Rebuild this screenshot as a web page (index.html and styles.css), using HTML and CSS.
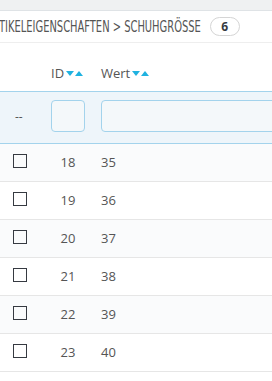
FILE: index.html
```html
<!DOCTYPE html>
<html lang="de">

<head>
    <meta charset="UTF-8">
    <meta name="viewport" content="width=device-width, initial-scale=1.0">
    <title>Schuhgrösse</title>
    <link rel="stylesheet" href="styles.css">
</head>

<body>
    <div class="topbar"></div>

    <div class="panel">
        <div class="panel-heading">
            <span class="crumb">TIKELEIGENSCHAFTEN &gt; SCHUHGRÖSSE</span>
            <span class="badge">6</span>
        </div>

        <table class="grid">
            <thead>
                <tr class="head-row">
                    <th class="col-check"></th>
                    <th class="col-id">ID<span class="sort-down"></span><span class="sort-up"></span></th>
                    <th class="col-value">Wert<span class="sort-down"></span><span class="sort-up"></span></th>
                </tr>
                <tr class="filter-row">
                    <th class="col-check"><span class="dash">--</span></th>
                    <th class="col-id"><input type="text" class="filter"></th>
                    <th class="col-value"><input type="text" class="filter filter-wide"></th>
                </tr>
            </thead>
            <tbody>
                <tr class="odd">
                    <td class="col-check"><span class="box"></span></td>
                    <td class="col-id">18</td>
                    <td class="col-value">35</td>
                </tr>
                <tr>
                    <td class="col-check"><span class="box"></span></td>
                    <td class="col-id">19</td>
                    <td class="col-value">36</td>
                </tr>
                <tr class="odd">
                    <td class="col-check"><span class="box"></span></td>
                    <td class="col-id">20</td>
                    <td class="col-value">37</td>
                </tr>
                <tr>
                    <td class="col-check"><span class="box"></span></td>
                    <td class="col-id">21</td>
                    <td class="col-value">38</td>
                </tr>
                <tr class="odd">
                    <td class="col-check"><span class="box"></span></td>
                    <td class="col-id">22</td>
                    <td class="col-value">39</td>
                </tr>
                <tr>
                    <td class="col-check"><span class="box"></span></td>
                    <td class="col-id">23</td>
                    <td class="col-value">40</td>
                </tr>
            </tbody>
        </table>
    </div>
</body>

</html>
```

FILE: styles.css
```css
* {
    box-sizing: border-box;
    margin: 0;
    padding: 0;
}

body {
    font-family: "Open Sans", "Noto Sans", sans-serif;
    font-size: 13px;
    color: #555;
    background-color: #fff;
    overflow: hidden;
}

.topbar {
    height: 11px;
    background-color: #eff1f2;
    border-bottom: 1px solid #dfe3e6;
}

/* Panel heading with breadcrumb */
.panel-heading {
    height: 32px;
    display: flex;
    align-items: center;
    border-bottom: 1px solid #eeeeee;
    white-space: nowrap;
}

/* condensed title font is not installed, so squeeze DejaVu Condensed */
.crumb {
    display: inline-block;
    font-family: "DejaVu Sans Condensed", "DejaVu Sans", sans-serif;
    font-stretch: condensed;
    font-size: 15px;
    color: #555;
    transform: scaleX(0.735);
    transform-origin: left center;
    margin-left: -1px;
    margin-right: -73px;
}

.badge {
    display: inline-block;
    margin-left: 9px;
    width: 30px;
    height: 19px;
    line-height: 17px;
    border: 1px solid #d5d5d5;
    border-radius: 10px;
    text-align: center;
    font-weight: bold;
    font-size: 12px;
    color: #363a41;
}

/* Table */
.grid {
    width: 100%;
    border-collapse: collapse;
    table-layout: fixed;
}

.col-check {
    width: 43px;
    padding-left: 13px;
    text-align: left;
}

.col-id {
    width: 50px;
    padding: 0 8px;
    text-align: center;
}

.col-value {
    padding: 0 0 0 8px;
    text-align: left;
}

.head-row th {
    height: 48px;
    font-weight: normal;
    font-size: 13px;
    color: #555;
    vertical-align: bottom;
    padding-bottom: 9px;
    border-bottom: 1px solid #a3d3ec;
}

.head-row .col-id {
    text-align: left;
}

.sort-down,
.sort-up {
    display: inline-block;
    width: 0;
    height: 0;
    border-left: 4px solid transparent;
    border-right: 4px solid transparent;
    vertical-align: 2px;
}

.sort-down {
    border-top: 5px solid #1fb2e0;
    margin-left: 2px;
}

.sort-up {
    border-bottom: 5px solid #1fb2e0;
    margin-left: 1px;
}

.filter-row th {
    height: 52px;
    background-color: #eef5fa;
    border-bottom: 1px solid #a3d3ec;
    font-weight: normal;
    vertical-align: top;
    padding-top: 8px;
}

.dash {
    display: inline-block;
    padding: 8px 0 0 2px;
    font-size: 12px;
}

input.filter {
    width: 100%;
    height: 32px;
    border: 1px solid #a3d3ec;
    border-radius: 4px;
    background-color: #f4f8fa;
}

input.filter-wide {
    width: 200%;
}

tbody td {
    height: 38px;
    border-bottom: 1px solid #e6e6e6;
    vertical-align: middle;
    padding-bottom: 1px;
}

tbody tr.odd td {
    background-color: #fafbfc;
}

.box {
    display: inline-block;
    width: 14px;
    height: 14px;
    border: 1.5px solid #363a41;
    vertical-align: middle;
    margin-top: -4px;
}
```
